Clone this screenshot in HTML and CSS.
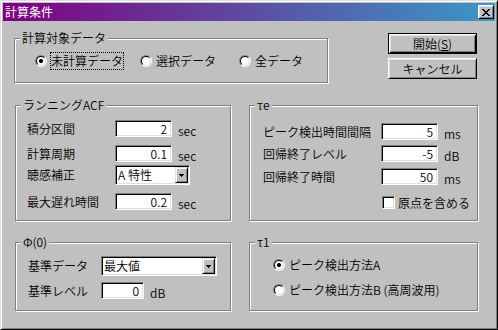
FILE: index.html
```html
<!DOCTYPE html>
<html lang="ja">
<head>
    <meta charset="UTF-8">
    <meta name="viewport" content="width=device-width, initial-scale=1.0">
    <title>計算条件</title>
    <link rel="stylesheet" href="styles.css">
</head>
<body>
    <div class="window">
        <div class="titlebar">
            <span class="title">計算条件</span>
            <button class="close" title="閉じる">
                <svg width="8" height="7" viewBox="0 0 8 7" shape-rendering="crispEdges">
                    <path d="M0 0h2v1h-2z M6 0h2v1h-2z M1 1h2v1h-2z M5 1h2v1h-2z M2 2h4v1h-4z M3 3h2v1h-2z M2 4h4v1h-4z M1 5h2v1h-2z M5 5h2v1h-2z M0 6h2v1h-2z M6 6h2v1h-2z" fill="#000"/>
                </svg>
            </button>
        </div>

        <div class="client">
            <!-- top row: target data + buttons -->
            <div class="row">
                <div class="group group-target">
                    <div class="legend">計算対象データ</div>
                    <div class="radio-row">
                        <div class="option opt-1"><span class="radio checked"></span><span class="option-text focus">未計算データ</span></div>
                        <div class="option opt-2"><span class="radio"></span><span class="option-text">選択データ</span></div>
                        <div class="option"><span class="radio"></span><span class="option-text">全データ</span></div>
                    </div>
                </div>
                <div class="buttons">
                    <button class="btn default">開始(<u>S</u>)</button>
                    <button class="btn">キャンセル</button>
                </div>
            </div>

            <!-- middle row -->
            <div class="row row-mid">
                <div class="group group-acf">
                    <div class="legend">ランニングACF</div>
                    <div class="group-body">
                        <div class="field acf-1">
                            <span class="field-label">積分区間</span>
                            <input class="edit w57" type="text" value="2" readonly>
                            <span class="unit">sec</span>
                        </div>
                        <div class="field acf-2">
                            <span class="field-label">計算周期</span>
                            <input class="edit w57" type="text" value="0.1" readonly>
                            <span class="unit">sec</span>
                        </div>
                        <div class="field combo-field acf-3">
                            <span class="field-label">聴感補正</span>
                            <div class="combo w75">
                                <span class="combo-text">A 特性</span>
                                <span class="combo-btn">
                                    <svg width="5" height="3" viewBox="0 0 5 3" shape-rendering="crispEdges"><path d="M0 0h5v1h-5z M1 1h3v1h-3z M2 2h1v1h-1z" fill="#000"/></svg>
                                </span>
                            </div>
                        </div>
                        <div class="field acf-4">
                            <span class="field-label">最大遅れ時間</span>
                            <input class="edit w57" type="text" value="0.2" readonly>
                            <span class="unit">sec</span>
                        </div>
                    </div>
                </div>

                <div class="group group-te">
                    <div class="legend">τe</div>
                    <div class="group-body">
                        <div class="field te-1">
                            <span class="field-label">ピーク検出時間間隔</span>
                            <input class="edit w57" type="text" value="5" readonly>
                            <span class="unit">ms</span>
                        </div>
                        <div class="field te-2">
                            <span class="field-label">回帰終了レベル</span>
                            <input class="edit w57" type="text" value="-5" readonly>
                            <span class="unit">dB</span>
                        </div>
                        <div class="field te-3">
                            <span class="field-label">回帰終了時間</span>
                            <input class="edit w57" type="text" value="50" readonly>
                            <span class="unit">ms</span>
                        </div>
                        <div class="check-row">
                            <span class="checkbox"></span>
                            <span class="check-text">原点を含める</span>
                        </div>
                    </div>
                </div>
            </div>

            <!-- bottom row -->
            <div class="row row-bottom">
                <div class="group group-phi">
                    <div class="legend">Φ(0)</div>
                    <div class="group-body">
                        <div class="field combo-field phi-1">
                            <span class="field-label">基準データ</span>
                            <div class="combo w116">
                                <span class="combo-text">最大値</span>
                                <span class="combo-btn">
                                    <svg width="5" height="3" viewBox="0 0 5 3" shape-rendering="crispEdges"><path d="M0 0h5v1h-5z M1 1h3v1h-3z M2 2h1v1h-1z" fill="#000"/></svg>
                                </span>
                            </div>
                        </div>
                        <div class="field phi-2">
                            <span class="field-label">基準レベル</span>
                            <input class="edit w43" type="text" value="0" readonly>
                            <span class="unit">dB</span>
                        </div>
                    </div>
                </div>

                <div class="group group-t1">
                    <div class="legend">τ1</div>
                    <div class="group-body">
                        <div class="option t1-a"><span class="radio checked"></span><span class="option-text">ピーク検出方法A</span></div>
                        <div class="option t1-b"><span class="radio"></span><span class="option-text">ピーク検出方法B (高周波用)</span></div>
                    </div>
                </div>
            </div>
        </div>
    </div>
</body>
</html>
```

FILE: styles.css
```css
body {
    margin: 0;
    font-family: "Noto Sans CJK JP", "Liberation Sans", sans-serif;
    font-size: 12px;
    font-weight: 350;
    color: #000;
    background-color: #c0c0c0;
}

/* window frame */
.window {
    width: 498px;
    height: 330px;
    box-sizing: border-box;
    padding: 2px;
    background-color: #c0c0c0;
    border: 1px solid;
    border-color: #dfdfdf #000 #000 #dfdfdf;
    box-shadow: inset 1px 1px #fff, inset -1px -1px #808080;
}

.titlebar {
    height: 18px;
    display: flex;
    align-items: center;
    padding-left: 2px;
    background: linear-gradient(to right, #800080, #3a98c6);
    color: #fff;
}

.title {
    line-height: 14px;
    font-weight: 400;
}

.close {
    margin-left: auto;
    margin-right: 1px;
    width: 16px;
    height: 14px;
    box-sizing: border-box;
    padding: 0;
    display: flex;
    align-items: center;
    justify-content: center;
    background-color: #c0c0c0;
    border: 1px solid;
    border-color: #fff #000 #000 #fff;
    box-shadow: inset 1px 1px #dfdfdf, inset -1px -1px #808080;
}

.client {
    padding: 12px 0 0 12px;
}

.row {
    display: flex;
    align-items: flex-start;
}

.row-mid {
    margin-top: 22px;
}

.row-bottom {
    margin-top: 21px;
}

/* etched group box */
.group {
    box-sizing: border-box;
    border: 1px solid #808080;
    box-shadow: inset 1px 1px #fff, 1px 1px #fff;
}

.legend {
    width: max-content;
    height: 14px;
    line-height: 14px;
    margin: -8px 0 0 5px;
    padding: 0 2px;
    background-color: #c0c0c0;
}

.group-target {
    width: 314px;
    height: 45px;
    margin: 5px 0 0 -1px;
}

.group-acf,
.group-phi {
    width: 216px;
}

.group-acf {
    height: 116px;
}

.group-acf .group-body {
    padding-left: 11px;
}

.group-te,
.group-t1 {
    width: 229px;
    margin-left: 18px;
}

.group-te {
    height: 116px;
}

.group-te .group-body {
    padding-left: 13px;
}

.group-phi {
    height: 69px;
}

.group-phi .group-body {
    padding-left: 12px;
}

.group-t1 {
    height: 69px;
}

.group-t1 .group-body {
    padding-left: 23px;
}

/* buttons */
.buttons {
    display: flex;
    flex-direction: column;
    gap: 4px;
    margin-left: 60px;
}

.btn {
    width: 89px;
    height: 21px;
    box-sizing: border-box;
    padding: 0;
    font-family: inherit;
    font-size: 12px;
    font-weight: inherit;
    line-height: 14px;
    color: #000;
    background-color: #c0c0c0;
    border: 1px solid;
    border-color: #fff #000 #000 #fff;
    box-shadow: inset 1px 1px #dfdfdf, inset -1px -1px #808080;
}

.btn.default {
    border-color: #000;
    box-shadow: inset 1px 1px #fff, inset -1px -1px #000, inset 2px 2px #dfdfdf, inset -2px -2px #808080;
}

.btn u {
    text-underline-offset: 1px;
}

/* radio buttons */
.radio-row {
    display: flex;
    margin-top: 7px;
    padding-left: 20px;
    height: 18px;
}

.option {
    display: flex;
    align-items: center;
}

.opt-1 {
    width: 105px;
}

.opt-2 {
    width: 99px;
}

.radio {
    flex: none;
    width: 12px;
    height: 12px;
    box-sizing: border-box;
    border-radius: 50%;
    border: 1px solid;
    border-color: #808080 #fff #fff #808080;
}

.radio::before {
    content: "";
    display: block;
    width: 10px;
    height: 10px;
    box-sizing: border-box;
    border-radius: 50%;
    border: 1px solid;
    border-color: #000 #dfdfdf #dfdfdf #000;
    background-color: #fff;
}

.radio.checked::before {
    background: radial-gradient(circle, #000 1.8px, #fff 2.3px);
}

.option-text {
    margin-left: 3px;
    line-height: 16px;
    border: 1px dotted transparent;
}

.option-text.focus {
    border-color: #000;
}

.t1-a {
    margin-top: 9px;
    height: 14px;
}

.t1-b {
    margin-top: 11px;
    height: 14px;
}

/* label + edit rows */
.field {
    display: flex;
    align-items: center;
    height: 17px;
}

.combo-field {
    height: 20px;
}

.field-label {
    flex: none;
    line-height: 14px;
}

.group-acf .field-label {
    width: 88px;
}

.group-te .field-label {
    width: 118px;
}

.group-phi .field-label {
    width: 73px;
}

.acf-1 { margin-top: 8px; }
.acf-2 { margin-top: 8px; }
.acf-3 { margin-top: 3px; }
.acf-4 { margin-top: 8px; }

.te-1 { margin-top: 11px; }
.te-2 { margin-top: 5px; }
.te-3 { margin-top: 6px; }

.phi-1 { margin-top: 7px; }
.phi-2 { margin-top: 6px; }

.edit {
    flex: none;
    height: 17px;
    box-sizing: border-box;
    margin: 0;
    padding: 0 4px 0 2px;
    font-family: inherit;
    font-size: 12px;
    font-weight: inherit;
    text-align: right;
    color: #000;
    background-color: #fff;
    border: 1px solid;
    border-color: #808080 #fff #fff #808080;
    box-shadow: inset 1px 1px #000, inset -1px -1px #dfdfdf;
    outline: none;
}

.w57 { width: 57px; }
.w43 { width: 43px; }
.w75 { width: 75px; }
.w116 { width: 116px; }

.unit {
    align-self: flex-end;
    margin-left: 6px;
    line-height: 12px;
}

/* combo box */
.combo {
    flex: none;
    height: 20px;
    box-sizing: border-box;
    display: flex;
    background-color: #fff;
    border: 1px solid;
    border-color: #808080 #fff #fff #808080;
    box-shadow: inset 1px 1px #000, inset -1px -1px #dfdfdf;
    padding: 1px;
}

.combo-text {
    flex: 1;
    padding-left: 1px;
    line-height: 16px;
}

.combo-btn {
    width: 13px;
    height: 16px;
    box-sizing: border-box;
    display: flex;
    align-items: center;
    justify-content: center;
    background-color: #c0c0c0;
    border: 1px solid;
    border-color: #dfdfdf #000 #000 #dfdfdf;
    box-shadow: inset 1px 1px #fff, inset -1px -1px #808080;
}

/* checkbox */
.check-row {
    display: flex;
    align-items: center;
    height: 13px;
    margin: 11px 0 0 119px;
}

.checkbox {
    flex: none;
    width: 13px;
    height: 13px;
    box-sizing: border-box;
    background-color: #fff;
    border: 1px solid;
    border-color: #808080 #fff #fff #808080;
    box-shadow: inset 1px 1px #000, inset -1px -1px #dfdfdf;
}

.check-text {
    margin-left: 3px;
    line-height: 14px;
}
```
